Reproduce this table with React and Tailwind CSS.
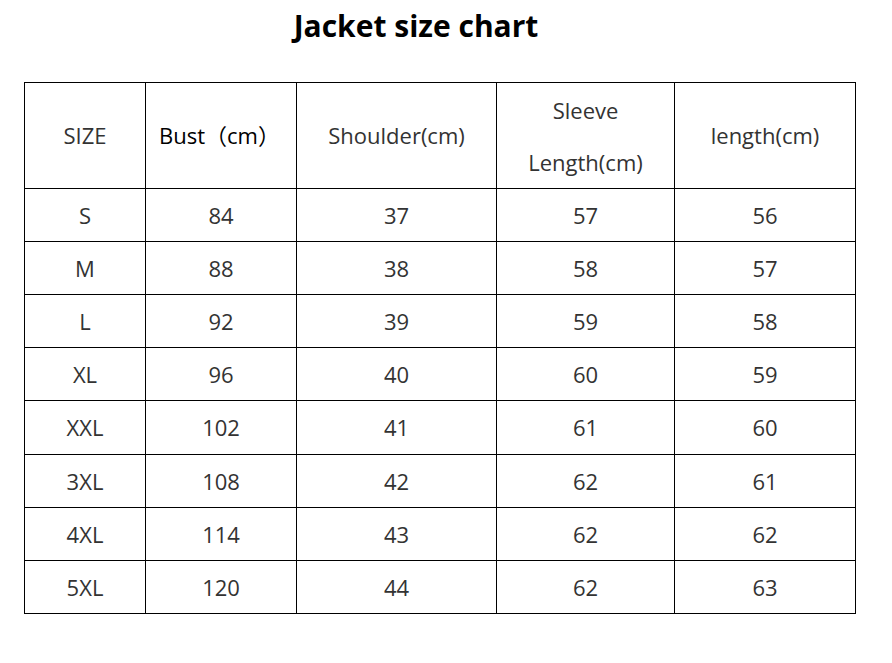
import React from 'react';

const ROWS = [
    ['S', '84', '37', '57', '56'],
    ['M', '88', '38', '58', '57'],
    ['L', '92', '39', '59', '58'],
    ['XL', '96', '40', '60', '59'],
    ['XXL', '102', '41', '61', '60'],
    ['3XL', '108', '42', '62', '61'],
    ['4XL', '114', '43', '62', '62'],
    ['5XL', '120', '44', '62', '63'],
];

const App = () => {
    return (
        <div className="w-[892px] h-[663px] bg-white font-['Open_Sans','Noto_Sans_CJK_SC',sans-serif] text-[#333]">
            <h1 className="pt-[4px] pr-[60px] text-center text-[30px] font-bold text-black leading-[43px]">
                Jacket size chart
            </h1>

            <table className="ml-[24px] mt-[35px] border-collapse table-fixed text-[22px] text-center">
                <colgroup>
                    <col className="w-[121px]" />
                    <col className="w-[151px]" />
                    <col className="w-[200px]" />
                    <col className="w-[178px]" />
                    <col className="w-[181px]" />
                </colgroup>
                <thead>
                    <tr className="h-[106px]">
                        <th className="border border-black font-normal">SIZE</th>
                        <th className="border border-black font-normal text-black pr-[3px]">Bust（cm）</th>
                        <th className="border border-black font-normal">Shoulder(cm)</th>
                        <th className="border border-black font-normal leading-[52px]">
                            Sleeve<br />Length(cm)
                        </th>
                        <th className="border border-black font-normal">length(cm)</th>
                    </tr>
                </thead>
                <tbody>
                    {ROWS.map((row, i) => (
                        <tr key={row[0]} className={i === 4 ? 'h-[54px]' : 'h-[53px]'}>
                            {row.map((cell, j) => (
                                <td key={j} className="border border-black">{cell}</td>
                            ))}
                        </tr>
                    ))}
                </tbody>
            </table>
        </div>
    );
};

export default App;
